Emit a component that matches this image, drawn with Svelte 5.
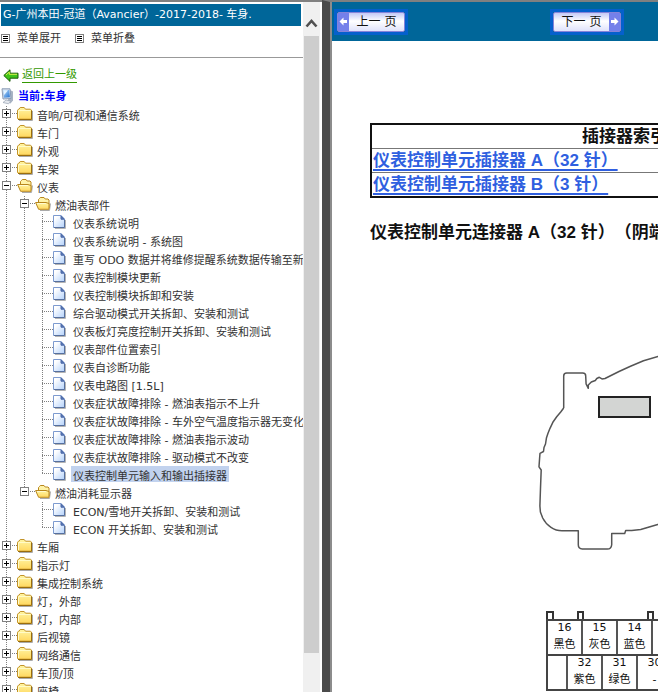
<script lang="ts">
	type TreeNode = { label: string; open?: boolean; children?: TreeNode[] };
	type Pin = { no: string; color: string };

	const pages = (labels: string[]): TreeNode[] => labels.map((label) => ({ label }));
	const folder = (label: string): TreeNode => ({ label, children: [] });

	let tree = $state<TreeNode[]>([
		folder('音响/可视和通信系统'),
		folder('车门'),
		folder('外观'),
		folder('车架'),
		{
			label: '仪表',
			open: true,
			children: [
				{
					label: '燃油表部件',
					open: true,
					children: pages([
						'仪表系统说明',
						'仪表系统说明 - 系统图',
						'重写 ODO 数据并将维修提醒系统数据传输至新',
						'仪表控制模块更新',
						'仪表控制模块拆卸和安装',
						'综合驱动模式开关拆卸、安装和测试',
						'仪表板灯亮度控制开关拆卸、安装和测试',
						'仪表部件位置索引',
						'仪表自诊断功能',
						'仪表电路图 [1.5L]',
						'仪表症状故障排除 - 燃油表指示不上升',
						'仪表症状故障排除 - 车外空气温度指示器无变化',
						'仪表症状故障排除 - 燃油表指示波动',
						'仪表症状故障排除 - 驱动模式不改变',
						'仪表控制单元输入和输出插接器'
					])
				},
				{
					label: '燃油消耗显示器',
					open: true,
					children: pages(['ECON/雪地开关拆卸、安装和测试', 'ECON 开关拆卸、安装和测试'])
				}
			]
		},
		folder('车厢'),
		folder('指示灯'),
		folder('集成控制系统'),
		folder('灯，外部'),
		folder('灯，内部'),
		folder('后视镜'),
		folder('网络通信'),
		folder('车顶/顶'),
		folder('座椅')
	]);

	let selected = $state('仪表控制单元输入和输出插接器');

	const upperPins: Pin[] = [
		{ no: '16', color: '黑色' },
		{ no: '15', color: '灰色' },
		{ no: '14', color: '蓝色' },
		{ no: '13', color: '-' }
	];
	const lowerPins: Pin[] = [
		{ no: '32', color: '紫色' },
		{ no: '31', color: '绿色' },
		{ no: '30', color: '-' }
	];

	function setAll(nodes: TreeNode[], open: boolean): void {
		for (const node of nodes) {
			if (!node.children) continue;
			node.open = open;
			setAll(node.children, open);
		}
	}
</script>

{#snippet listIcon()}
	<svg width="9" height="9" viewBox="0 0 9 9" shape-rendering="crispEdges" aria-hidden="true">
		<rect x="0.5" y="0.5" width="8" height="8" fill="#fff" stroke="#808080" />
		<path d="M2 2.5h5M2 4.5h5M2 6.5h5" stroke="#000" />
	</svg>
{/snippet}

{#snippet folderIcon(open: boolean)}
	<svg class="icon" width="16" height="14" viewBox="0 0 16 14" aria-hidden="true">
		{#if open}
			<path d="M5 13.5h9.5l1-7" fill="none" stroke="#aaa" />
			<path d="M3.500 9V2.500l1-1 .8-1h3.700l1.200 1.500h2.800l1 1V11H5z" fill="#fff3a8" stroke="#b8861c" />
			<path d="M.6 5.500h10.400l3 1v5.800H3.600z" fill="url(#folder-fill)" stroke="#b8861c" />
			<path d="M2 6.500h8.800" stroke="#fffbd0" />
		{:else}
			<path d="M2 13.5h13.5V4" fill="none" stroke="#aaa" />
			<path d="M.5 11.5V3.2l1-1H2L3.2.5h4L8.5 2.2h5l1 1v9H1.2z" fill="url(#folder-fill)" stroke="#c2932a" />
			<path d="M1.5 3.5h12M1.5 4v7" stroke="#fffbc8" fill="none" />
			<path d="M14.5 3.5v9H1" stroke="#9a6d0c" fill="none" />
		{/if}
	</svg>
{/snippet}

{#snippet pageIcon()}
	<svg class="icon page-icon" width="13" height="14" viewBox="0 0 13 14" aria-hidden="true">
		<path d="M2 13.5h10.5V5" fill="none" stroke="#b4b4b4" />
		<path d="M.5.5h7.4l3.6 3.6v8.4H.5z" fill="url(#page-fill)" stroke="#7d9bd0" />
		<path d="M8 .8v3.400h3.400z" fill="#5a78b4" stroke="#4a69a8" />
		<path d="M11.5 5v7.5H1" fill="none" stroke="#56709f" />
	</svg>
{/snippet}

{#snippet branch(nodes: TreeNode[])}
	<ul>
		{#each nodes as node (node.label)}
			<li>
				<div class="row">
					{#if node.children}
						<button
							class="toggle"
							type="button"
							aria-label={node.label}
							aria-expanded={!!node.open}
							onclick={() => (node.open = !node.open)}
						>
							<svg width="9" height="9" viewBox="0 0 9 9" shape-rendering="crispEdges" aria-hidden="true">
								<rect x="0.5" y="0.5" width="8" height="8" fill="#fff" stroke="#808080" />
								<path d={node.open ? 'M2 4.5h5' : 'M2 4.5h5M4.5 2v5'} stroke="#000" />
							</svg>
						</button>
						{@render folderIcon(!!node.open)}
					{:else}
						<span class="toggle"></span>
						{@render pageIcon()}
					{/if}
					<button
						class="label"
						class:selected={selected === node.label}
						type="button"
						onclick={() => (selected = node.label)}>{node.label}</button
					>
				</div>
				{#if node.open && node.children?.length}
					{@render branch(node.children)}
				{/if}
			</li>
		{/each}
	</ul>
{/snippet}

{#snippet pins(items: Pin[])}
	{#each items as pin (pin.no)}
		<li><span class="pin-no">{pin.no}</span><span class="pin-color">{pin.color}</span></li>
	{/each}
{/snippet}

<svg class="defs" width="0" height="0" aria-hidden="true">
	<defs>
		<linearGradient id="folder-fill" x2="0" y2="1">
			<stop offset="0" stop-color="#fff6a4" />
			<stop offset="1" stop-color="#ffd75e" />
		</linearGradient>
		<linearGradient id="page-fill" x2="1" y2="1">
			<stop offset="0.2" stop-color="#fff" />
			<stop offset="1" stop-color="#b4d2fb" />
		</linearGradient>
		<linearGradient id="screen-fill" x2="1" y2="1">
			<stop offset="0" stop-color="#bfe2ff" />
			<stop offset="1" stop-color="#1e6fd0" />
		</linearGradient>
	</defs>
</svg>

<div class="frames">
	<aside>
		<nav>
			<h1>G-广州本田-冠道（Avancier）-2017-2018- 车身.</h1>
			<div class="menu">
				<button type="button" onclick={() => setAll(tree, true)}>{@render listIcon()}菜单展开</button>
				<button type="button" onclick={() => setAll(tree, false)}>{@render listIcon()}菜单折叠</button>
			</div>
			<div class="back">
				<svg width="16" height="13" viewBox="0 0 16 13" aria-hidden="true">
					<path d="M.8 6.5 7 .8v3.4h8v5H7v3.2z" fill="#3fc41a" stroke="#1b5c08" />
					<path d="M3 6 6.3 3v2.3H14" fill="none" stroke="#d9f24a" />
				</svg>
				<a href="#up">返回上一级</a>
			</div>
			<div class="current">
				<svg width="15" height="17" viewBox="0 0 15 17" aria-hidden="true">
					<path d="M10 2 13 3.500v9L10.500 15.500l-3-1z" fill="#a9b4c4" />
					<path d="M2 .8h8l1 9.700-8 .5z" fill="#d5dfed" stroke="#8b9cb5" />
					<path d="M3.200 2h6l.7 7.300-6 .5z" fill="url(#screen-fill)" />
					<path d="M3.500 2.300H8L4.200 7z" fill="#e3f3ff" />
					<path d="M3 14.500 6 12l5 1.200-2.500 2.600z" fill="#e4e8ee" stroke="#97a2b2" stroke-width=".7" />
				</svg>
				<strong>当前:车身</strong>
			</div>
			<div class="tree">{@render branch(tree)}</div>
		</nav>
		<div class="scrollbar" aria-hidden="true">
			<svg width="17" height="34" viewBox="0 0 17 34">
				<path d="M3.5 24.5 8.5 19l5 5.5" fill="none" stroke="#505050" stroke-width="2.6" />
			</svg>
			<div class="track"><div class="thumb"></div></div>
		</div>
	</aside>

	<main>
		<header>
			<button class="pager" type="button">
				<span class="face">
					<svg width="11" height="18" viewBox="0 0 11 18" aria-hidden="true">
						<rect width="11" height="18" fill="#7480ea" />
						<path d="M1.5 8.500 5.500 4.500v2.500H9v3H5.500v2.500z" fill="#fff" />
					</svg>
					<span>上一 页</span>
				</span>
			</button>
			<button class="pager" type="button">
				<span class="face">
					<span>下一 页</span>
					<svg width="11" height="18" viewBox="0 0 11 18" aria-hidden="true">
						<rect width="11" height="18" fill="#7480ea" />
						<path d="M9.500 8.500 5.500 4.500v2.500H2v3h3.500v2.500z" fill="#fff" />
					</svg>
				</span>
			</button>
		</header>

		<article>
			<table>
				<thead>
					<tr><th>插接器索引</th></tr>
				</thead>
				<tbody>
					<tr><td><a href="#connector-a">仪表控制单元插接器 A（32 针）</a></td></tr>
					<tr><td><a href="#connector-b">仪表控制单元插接器 B（3 针）</a></td></tr>
				</tbody>
			</table>

			<h2 id="connector-a">仪表控制单元连接器 A（32 针）（阴端子）</h2>

			<svg class="cluster" width="340" height="212" viewBox="530 344 340 212" aria-hidden="true">
				<g fill="none" stroke="#555" stroke-width="1.5" stroke-linejoin="round">
					<path
						d="M563.7 408V376q0-3 3-3h16q3 0 3 3l.4 8 2.200 4.300v-3.300l3-3 4-1.500 1.500-2 2.500-1.200 2.700 1.600 3-.4 6-3 8-4 11.500-5.200 13-5.500 14.500-4.300q50-16 100-4"
					/>
					<path
						d="M563.7 408l-3 4-4 4.700-3.500 5-3.200 6.600-2 5-1.500 4.400-1 6.300-1.500 3.500-.5 4-3.500 1.800-.4 5-.6 8.500 2.200 3.200-.7 18-.6 18 .5 6 2.300 6q3 6 8.300 9.300 5 3.400 11 3.400h16.300v14q0 4 4 4.300h25q4 0 4.400-4.300V533.500h13l1-3h6l9-1 17-5 40-12"
					/>
				</g>
				<rect x="599" y="397" width="51" height="20" fill="#d3d5d3" stroke="#222" stroke-width="2" />
			</svg>

			<div class="connector">
				<svg width="140" height="8" viewBox="0 0 140 8" aria-hidden="true">
					<path d="M1 8V1h6v7M32 8V1h5v7M102 8V1h5v7" fill="none" stroke="#333" stroke-width="2" />
				</svg>
				<ol class="upper">{@render pins(upperPins)}</ol>
				<ol class="lower">{@render pins(lowerPins)}</ol>
			</div>
		</article>
	</main>
</div>

<style>
	:global(body) {
		overflow: hidden;
		background: #fff;
	}

	.defs {
		position: absolute;
	}

	.frames {
		display: grid;
		grid-template-columns: 322px minmax(0, 1fr);
		height: 100vh;
		color: #333;
		font: 11px/18px 'DejaVu Sans', 'Noto Sans CJK SC', sans-serif;
		text-spacing-trim: space-all;
	}

	button {
		margin: 0;
		border: 0;
		padding: 0;
		background: none;
		color: inherit;
		font: inherit;
		cursor: pointer;
	}

	svg {
		flex: none;
	}

	aside {
		display: flex;
		min-height: 0;
		border-top: 2px solid #808080;
	}

	nav {
		flex: 1;
		min-width: 0;
		overflow: hidden;
	}

	h1 {
		margin: 2px 2px 0 1px;
		padding: 0 2px;
		background: #069;
		color: #fff;
		font-size: 11px;
		font-weight: 400;
		line-height: 22px;
		white-space: nowrap;
	}

	.menu {
		display: flex;
		gap: 14px;
		height: 31px;
		padding-left: 1px;
		border-bottom: 1px solid #999;
	}

	.menu button {
		display: flex;
		align-items: center;
		gap: 7px;
		height: 25px;
	}

	.back {
		display: flex;
		align-items: center;
		gap: 3px;
		padding: 9px 0 5px 3px;
	}

	.back a {
		border-bottom: 1px solid #390;
		color: #390;
		line-height: 15px;
		text-decoration: none;
	}

	.current {
		display: flex;
		gap: 3px;
		height: 18px;
		color: #00f;
	}

	ul,
	ol {
		margin: 0;
		padding: 0;
		list-style: none;
	}

	.tree ul ul {
		padding-left: 18px;
	}

	/* dotted guide down the left, cut short at the last child */
	.tree li {
		background: repeating-linear-gradient(#808080 0 1px, transparent 1px 2px) 6px 0 / 1px 100%
			no-repeat;
	}

	.tree ul ul > li:last-child {
		background-size: 1px 8px;
	}

	.row {
		display: flex;
		height: 18px;
		background: repeating-linear-gradient(90deg, #808080 0 1px, transparent 1px 2px) 6px 7px / 12px
			1px no-repeat;
	}

	.toggle {
		flex: none;
		width: 17px;
		height: 15px;
		padding: 0 0 0 2px;
		box-sizing: border-box;
		line-height: 0;
		text-align: left;
	}

	.toggle svg {
		display: block;
	}

	.icon {
		margin: 1px 2px 0 0;
	}

	.page-icon {
		margin-right: 5px;
	}

	.label {
		height: 16px;
		padding: 2px 2px 0;
		box-sizing: border-box;
		line-height: 18px;
		white-space: nowrap;
	}

	.label.selected {
		background: #c1d2ee;
	}

	.scrollbar {
		display: flex;
		flex: none;
		flex-direction: column;
		width: 17px;
		margin-right: 2px;
		background: #f0f0f0;
	}

	.track {
		flex: 1;
		padding: 0 1px;
	}

	.thumb {
		height: 94%;
		background: #cdcdcd;
	}

	main {
		min-width: 0;
		overflow: hidden;
		border-top: 2px solid #808080;
		border-left: 8px solid #4b4b4b;
		box-shadow: inset 2px 0 #8c8c8c;
		padding-left: 2px;
	}

	header {
		display: flex;
		align-items: center;
		gap: 142px;
		height: 39px;
		padding-left: 2px;
		background: #069;
	}

	.pager {
		border: 3px solid #0560cc;
		color: #111;
		font-size: 12px;
	}

	.face {
		display: flex;
		width: 66px;
		height: 18px;
		border: 1px solid #8583d8;
		border-radius: 2px;
		background: linear-gradient(#c3c9f6, #fff 45%, #dfe2fb);
	}

	.face span {
		flex: 1;
		line-height: 18px;
	}

	article {
		width: 509px;
		padding: 82px 0 0 38px;
		color: #111;
		font: 700 17px/24px 'Liberation Sans', 'Noto Sans CJK SC', sans-serif;
	}

	table {
		width: 100%;
		border: 2px solid #111;
		border-collapse: collapse;
	}

	th,
	td {
		height: 23px;
		border-top: 1px solid #777;
		padding: 0 1px;
		line-height: 22px;
		text-align: center;
	}

	td {
		text-align: left;
	}

	td a {
		color: #2f5fe0;
		text-decoration-thickness: 2px;
		text-underline-offset: 3px;
	}

	h2 {
		margin: 23px 0 0;
		font-size: 17px;
		line-height: 24px;
		white-space: nowrap;
	}

	.cluster {
		display: block;
		margin: 99px 0 0 160px;
	}

	.connector {
		width: 300px;
		margin: 55px 0 0 176px;
		font: 11px/18px 'DejaVu Sans', 'Noto Sans CJK SC', sans-serif;
	}

	.connector > svg {
		display: block;
	}

	ol {
		display: flex;
		border: solid #444;
		border-width: 2px 0 0 2px;
	}

	ol li {
		display: flex;
		flex: none;
		flex-direction: column;
		align-items: center;
		width: 35px;
		height: 33px;
		box-sizing: border-box;
		border-right: 2px solid #555;
	}

	.pin-no {
		line-height: 14px;
	}

	.pin-color {
		line-height: 20px;
	}

	.lower {
		border-bottom-width: 2px;
	}

	.lower::before {
		width: 20px;
		box-sizing: border-box;
		border-right: 2px solid #555;
		content: '';
	}
</style>
